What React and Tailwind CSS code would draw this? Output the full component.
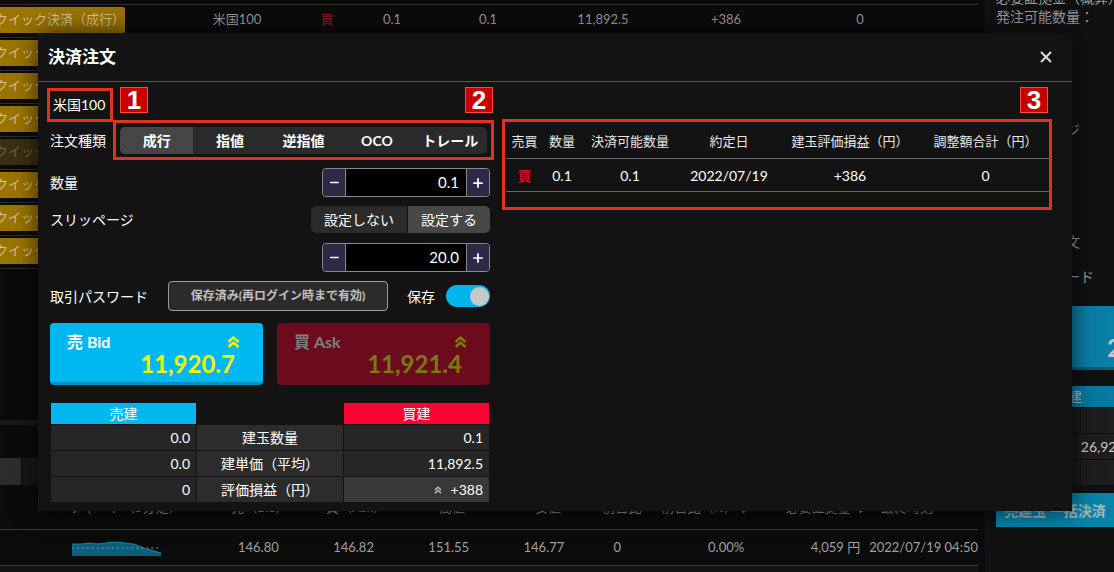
import React from 'react';
import { X, Minus, Plus } from 'lucide-react';

const Chevrons = ({ className }) => (
  <svg viewBox="0 0 13 12" className={className} fill="none" stroke="currentColor" strokeWidth="2.4">
    <polyline points="1.5,6 6.5,1.5 11.5,6" />
    <polyline points="1.5,11 6.5,6.5 11.5,11" />
  </svg>
);

const Stepper = ({ value }) => (
  <div className="flex h-[29px] w-[168px] overflow-hidden rounded-[4px] border border-[#8a8a8a]">
    <div className="flex w-[22px] items-center justify-center bg-[#2c2a46] text-white">
      <Minus size={13} strokeWidth={3} />
    </div>
    <div className="flex flex-1 items-center justify-end border-x border-[#8a8a8a] bg-black pr-[7px] text-[15px] text-white">
      {value}
    </div>
    <div className="flex w-[22px] items-center justify-center bg-[#2c2a46] text-white">
      <Plus size={14} strokeWidth={3} />
    </div>
  </div>
);

const Sparkline = () => (
  <svg width="90" height="16" viewBox="0 0 90 16">
    <path d="M0 4 L10 4 L18 3 L26 4 L34 3 L44 2 L54 3 L62 4 L68 6 L74 9 L80 10 L86 12 L90 13 L90 16 L0 16 Z" fill="#0c5f7c" />
    <path d="M0 4 L10 4 L18 3 L26 4 L34 3 L44 2 L54 3 L62 4 L68 6 L74 9 L80 10 L86 12 L90 13" fill="none" stroke="#1289b0" strokeWidth="1" />
    <line x1="0" y1="8" x2="90" y2="8" stroke="#7aa0ad" strokeWidth="1" strokeDasharray="2 3" />
  </svg>
);

const orderTypes = ['成行', '指値', '逆指値', 'OCO', 'トレール'];

const App = () => {
  const rows = [0, 1, 2, 3, 4, 5, 6, 7];

  return (
    <div className="relative h-[572px] w-[1114px] overflow-hidden bg-[#0b0b0b] font-[family-name:Lato,'Noto_Sans_CJK_JP',sans-serif]">
      {/* page behind the dialog */}
      <div className="flex h-full">
        <div className="flex w-[978px] shrink-0 flex-col">
          <div className="h-[4px]" />
          <div className="border-b border-[#2e2e2e]">
            {rows.map((r) => (
              <div key={r} className="flex h-[33px] items-start border-t border-[#2e2e2e] pt-[2px]">
                <div
                  className={
                    r === 4
                      ? '-ml-[5px] flex h-[26px] w-[130px] shrink-0 items-center overflow-hidden whitespace-nowrap rounded-[2px] bg-[#3a2f14] text-[13px] text-[#6e6240]'
                      : '-ml-[5px] flex h-[26px] w-[130px] shrink-0 items-center overflow-hidden whitespace-nowrap rounded-[2px] bg-[#9c7500] text-[13px] text-[#d9c48e]'
                  }
                >
                  クイック決済（成行）
                </div>
                {r === 0 && (
                  <div className="flex h-[26px] items-center text-[13px] text-[#9a9a9a]">
                    <div className="w-[65px]" />
                    <div className="w-[94px] text-center">米国100</div>
                    <div className="w-[86px] text-center text-[#a0101e]">買</div>
                    <div className="w-[44px] text-center">0.1</div>
                    <div className="w-[148px] text-center">0.1</div>
                    <div className="w-[82px] text-center">11,892.5</div>
                    <div className="w-[164px] text-center">+386</div>
                    <div className="w-[104px] text-center">0</div>
                  </div>
                )}
              </div>
            ))}
          </div>
          <div className="h-[151px]" />
          <div className="h-[5px] bg-[#1a1a1a]" />
          <div className="h-[33px]" />
          <div className="flex h-[27px]">
            <div className="w-[21px] bg-[#2d2d2d]" />
            <div className="ml-px flex-1 bg-[#181818]" />
          </div>
          <div className="flex h-[45px] items-end border-b border-[#3a3a3a] pb-[13px] text-[13px] leading-[18px] text-[#8a8a8a]">
            <div className="w-[212px] pl-[70px]">チャート（5分足）</div>
            <div className="w-[96px] text-center">売（Bid）</div>
            <div className="w-[96px] text-center">買（Ask）</div>
            <div className="w-[96px] text-center">高値</div>
            <div className="w-[96px] text-center">安値</div>
            <div className="w-[52px] text-center">前日比</div>
            <div className="w-[102px] text-right">前日比（%）▼</div>
            <div className="w-[117px] text-right">必要証拠金 ▼</div>
            <div className="ml-[14px]">最終時刻</div>
          </div>
          <div className="flex h-[36px] items-center whitespace-nowrap border-b border-[#3a3a3a] pl-[72px] text-[13px] text-[#a0a0a0]">
            <Sparkline />
            <div className="w-[50px]" />
            <div className="w-[96px] text-center">146.80</div>
            <div className="w-[96px] text-center">146.82</div>
            <div className="w-[96px] text-center">151.55</div>
            <div className="w-[96px] text-center">146.77</div>
            <div className="w-[52px] text-center">0</div>
            <div className="w-[102px] text-right">0.00%</div>
            <div className="w-[117px] text-right">4,059 円</div>
            <div className="ml-[9px]">2022/07/19 04:50</div>
          </div>
          <div className="flex-1 bg-[#141414]" />
        </div>
        <div className="w-[7px] shrink-0" />
        <div className="flex w-[129px] shrink-0 flex-col overflow-hidden bg-[#111111] pl-[11px] text-[14px] text-[#9a9a9a]">
          <div className="-mt-[11px] whitespace-nowrap leading-[17px]">必要証拠金（概算）：</div>
          <div className="mt-[2px] whitespace-nowrap leading-[17px]">発注可能数量：</div>
          <div className="mt-[95px] whitespace-nowrap leading-[20px]">スリッページ</div>
          <div className="mt-[92px] whitespace-nowrap leading-[20px]">一括決済注文</div>
          <div className="mt-[15px] whitespace-nowrap leading-[20px]">取引パスワード</div>
          <div className="mt-[19px] h-[64px] w-[140px] shrink-0 border-b-[3px] border-[#075e7c] bg-[#0a7fa8] pl-[111px] pt-[28px] text-[24px] font-bold leading-[28px] text-[#c5c5c5] whitespace-nowrap">
            26,920.7
          </div>
          <div className="mt-[16px] flex h-[21px] w-[144px] shrink-0 items-center justify-center bg-[#087aa2] text-[#b5b5b5]">売建</div>
          {['', '26,920.5', ''].map((v, i) => (
            <div key={i} className="flex h-[26px] w-[140px] shrink-0 border-t border-[#0b0b0b]">
              <div className="w-[84px] bg-[#1a1a1a]" />
              <div className="ml-px flex flex-1 items-center whitespace-nowrap bg-[#1e1e1e] pl-[4px] text-[#c8c8c8]">{v}</div>
            </div>
          ))}
          <div className="mt-[8px] flex h-[34px] w-[118px] shrink-0 items-center justify-center whitespace-nowrap bg-[#0a83ac] font-bold text-[#a5b5bb]">
            売建玉 一括決済
          </div>
        </div>
      </div>

      {/* dialog */}
      <div className="absolute left-[38px] top-[33px] h-[478px] w-[1034px] bg-[#131313] text-white shadow-[0_0_24px_rgba(0,0,0,0.7)]">
        <div className="flex h-[49px] items-center justify-between border-b border-[#555555] pl-[10px] pr-[17px]">
          <div className="text-[17px] font-bold">決済注文</div>
          <X size={18} strokeWidth={2.5} className="text-[#dddddd]" />
        </div>

        <div className="flex pl-[12px]">
          {/* left: order form */}
          <div className="flex w-[440px] flex-col text-[14px]">
            <div className="mt-[5px] flex h-[34px] items-center pl-[3px]">米国100</div>

            <div className="mt-[6px] flex h-[27px] items-center">
              <div className="w-[70px]">注文種類</div>
              <div className="flex h-[27px] w-[367px] overflow-hidden rounded-[5px] bg-[#2a2a2a] font-bold">
                {orderTypes.map((t, i) => (
                  <div
                    key={t}
                    className={i === 0 ? 'flex flex-1 items-center justify-center bg-[#454545]' : 'flex flex-1 items-center justify-center'}
                  >
                    {t}
                  </div>
                ))}
              </div>
            </div>

            <div className="mt-[14px] flex items-center justify-between">
              <div>数量</div>
              <Stepper value="0.1" />
            </div>

            <div className="mt-[9px] flex items-center justify-between">
              <div>スリッページ</div>
              <div className="flex h-[27px] w-[179px] overflow-hidden rounded-[5px]">
                <div className="flex w-[96px] items-center justify-center bg-[#2b2b2b]">設定しない</div>
                <div className="ml-px flex flex-1 items-center justify-center bg-[#474747]">設定する</div>
              </div>
            </div>

            <div className="mt-[10px] flex justify-end">
              <Stepper value="20.0" />
            </div>

            <div className="mt-[9px] flex h-[30px] items-center">
              <div className="w-[118px]">取引パスワード</div>
              <div className="flex h-[30px] w-[220px] items-center justify-center rounded-[4px] border border-[#9a9a9a] bg-[#2b2b2b] text-[12px] font-bold text-[#c0c0c0]">
                保存済み(再ログイン時まで有効)
              </div>
              <div className="ml-[19px]">保存</div>
              <div className="ml-[11px] flex h-[22px] w-[44px] items-center justify-end rounded-full bg-[#00b4ee] pr-px">
                <div className="h-[19px] w-[19px] rounded-full bg-[#c8c8c8]" />
              </div>
            </div>

            <div className="mt-[12px] flex gap-[14px]">
              <div className="flex h-[62px] w-[213px] flex-col rounded-[4px] border-b-[3px] border-[#0091c4] bg-[#00b8f1]">
                <div className="mt-[10px] flex h-[18px] items-center justify-between pl-[17px] pr-[23px]">
                  <span className="text-[16px] font-bold">売 Bid</span>
                  <Chevrons className="h-[12px] w-[13px] text-[#f5f500]" />
                </div>
                <div className="pr-[28px] text-right text-[24px] font-bold leading-[26px] text-[#f5f500]">11,920.7</div>
              </div>
              <div className="flex h-[62px] w-[213px] flex-col rounded-[4px] bg-[#6c0b1e]">
                <div className="mt-[10px] flex h-[18px] items-center justify-between pl-[17px] pr-[23px]">
                  <span className="text-[16px] font-bold text-[#7e7e7e]">買 Ask</span>
                  <Chevrons className="h-[12px] w-[13px] text-[#7d7d00]" />
                </div>
                <div className="pr-[28px] text-right text-[24px] font-bold leading-[26px] text-[#7a7a12]">11,921.4</div>
              </div>
            </div>

            <div className="ml-px mt-[18px] grid w-[438px] grid-cols-[145px_146px_145px] gap-px">
              <div className="flex h-[21px] items-center justify-center bg-[#00b8f0]">売建</div>
              <div />
              <div className="flex h-[21px] items-center justify-center bg-[#ff0033]">買建</div>

              <div className="flex h-[25px] items-center justify-end bg-[#262626] pr-[6px]">0.0</div>
              <div className="flex h-[25px] items-center justify-center bg-[#2c2c2c]">建玉数量</div>
              <div className="flex h-[25px] items-center justify-end bg-[#262626] pr-[6px]">0.1</div>

              <div className="flex h-[25px] items-center justify-end bg-[#262626] pr-[6px]">0.0</div>
              <div className="flex h-[25px] items-center justify-center bg-[#2c2c2c]">建単価（平均）</div>
              <div className="flex h-[25px] items-center justify-end bg-[#262626] pr-[6px]">11,892.5</div>

              <div className="flex h-[25px] items-center justify-end bg-[#262626] pr-[6px]">0</div>
              <div className="flex h-[25px] items-center justify-center bg-[#2c2c2c]">評価損益（円）</div>
              <div className="flex h-[25px] items-center justify-end gap-[9px] bg-[#383838] pr-[6px]">
                <Chevrons className="h-[8px] w-[8px] text-[#bdbdbd]" />
                <span>+388</span>
              </div>
            </div>
          </div>

          {/* right: position table */}
          <div className="ml-[16px] w-[544px] pt-[43px]">
            <div className="flex h-[34px] items-center border-b border-[#666666] text-[13px] text-[#e6e6e6]">
              <div className="w-[37px] text-center">売買</div>
              <div className="w-[38px] text-center">数量</div>
              <div className="w-[98px] text-center">決済可能数量</div>
              <div className="w-[100px] text-center">約定日</div>
              <div className="w-[142px] text-center">建玉評価損益（円）</div>
              <div className="w-[129px] text-center">調整額合計（円）</div>
            </div>
            <div className="flex h-[33px] items-center border-b border-[#666666] text-[14px]">
              <div className="w-[37px] text-center text-[#e0102a]">買</div>
              <div className="w-[38px] text-center">0.1</div>
              <div className="w-[98px] text-center">0.1</div>
              <div className="w-[100px] text-center">2022/07/19</div>
              <div className="w-[142px] text-center">+386</div>
              <div className="w-[129px] text-center">0</div>
            </div>
          </div>
        </div>

        {/* annotation marks */}
        <div className="absolute left-[9px] top-[55px] h-[34px] w-[66px] border-[3px] border-[#e0321f]" />
        <div className="absolute left-[75px] top-[87px] h-[40px] w-[381px] border-[3px] border-[#e0321f]" />
        <div className="absolute left-[464px] top-[86px] h-[91px] w-[550px] border-[3px] border-[#e0321f]" />
        <div className="absolute left-[82px] top-[54px] flex h-[26px] w-[28px] items-center justify-center border border-[#ff4a3a] bg-[#c80000] font-[family-name:'Liberation_Sans',sans-serif] text-[26px] font-bold leading-none">1</div>
        <div className="absolute left-[427px] top-[54px] flex h-[26px] w-[28px] items-center justify-center border border-[#ff4a3a] bg-[#c80000] font-[family-name:'Liberation_Sans',sans-serif] text-[26px] font-bold leading-none">2</div>
        <div className="absolute left-[982px] top-[54px] flex h-[26px] w-[28px] items-center justify-center border border-[#ff4a3a] bg-[#c80000] font-[family-name:'Liberation_Sans',sans-serif] text-[26px] font-bold leading-none">3</div>
      </div>
    </div>
  );
};

export default App;
